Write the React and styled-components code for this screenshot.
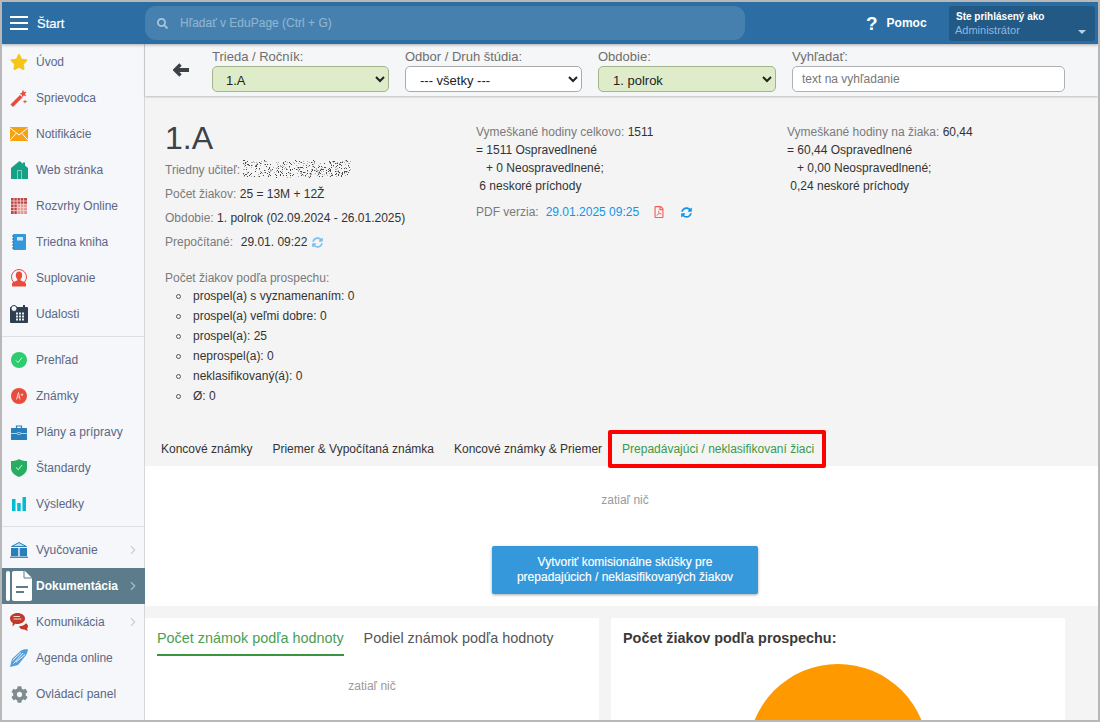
import styled, { createGlobalStyle } from 'styled-components';
import {
  FaCog,
  FaRegFilePdf,
  FaSearch,
  FaStar,
  FaSyncAlt,
} from 'react-icons/fa';
import { FiChevronRight } from 'react-icons/fi';

const GlobalStyle = createGlobalStyle`
  html, body {
    margin: 0;
    height: 100%;
    overflow: hidden;
  }

  body {
    font-family: 'Liberation Sans', Arial, sans-serif;
    font-size: 12px;
    color: #333;
  }
`;

const Frame = styled.div`
  box-sizing: border-box;
  width: 1100px;
  height: 722px;
  border: 2px solid #b8b8b8;
  display: grid;
  grid-template-columns: 143px 1fr;
  grid-template-rows: 42px 1fr;
  overflow: hidden;
`;

const Header = styled.header`
  grid-column: 1 / -1;
  display: flex;
  align-items: center;
  background: #2c6ea3;
  box-shadow: 0 1px 3px rgba(0, 0, 0, 0.3);
  position: relative;
  z-index: 2;
`;

const Burger = styled.div`
  width: 18px;
  margin-left: 8px;
  display: flex;
  flex-direction: column;
  gap: 4px;

  span {
    height: 2px;
    background: #fff;
  }
`;

const StartLabel = styled.div`
  width: 108px;
  margin-left: 9px;
  color: #fff;
  font-size: 13px;
  -webkit-text-stroke: 0.2px #fff;
`;

const SearchBar = styled.div`
  width: 600px;
  height: 34px;
  display: flex;
  align-items: center;
  gap: 12px;
  padding-left: 12px;
  box-sizing: border-box;
  background: #4580ae;
  border-radius: 11px;
  color: #8fb4d0;
  font-size: 12px;
  -webkit-text-stroke: 0.15px #8fb4d0;
`;

const HelpLink = styled.div`
  margin-left: 121px;
  width: 83px;
  display: flex;
  align-items: center;
  gap: 9px;
  color: #fff;
  font-size: 12px;
  font-weight: bold;

  b {
    font-size: 19px;
    line-height: 1;
  }
`;

const UserBox = styled.div`
  box-sizing: border-box;
  width: 146px;
  height: 35px;
  padding: 4px 7px 0;
  display: flex;
  flex-direction: column;
  gap: 1px;
  position: relative;
  background: #235a85;
  border-radius: 3px;
  font-size: 11px;
  line-height: 13px;

  strong {
    color: #fff;
    font-size: 10px;
  }

  span {
    color: #8db8e2;
    margin-left: -1px;
  }

  &::after {
    content: '';
    position: absolute;
    right: 9px;
    bottom: 7px;
    border: 4px solid transparent;
    border-top-color: #b9cfe2;
    border-bottom-width: 0;
  }
`;

const Sidebar = styled.nav`
  background: #f5f7fa;
  border-right: 1px solid #d4d6da;
`;

const NavGroup = styled.div`
  padding: 0 0 4px;
  margin-bottom: 5px;
  border-bottom: ${(p) => (p.$last ? 'none' : '1px solid #dddfe3')};
`;

const NavRow = styled.div`
  height: 36px;
  display: flex;
  align-items: center;
  position: relative;
  padding-left: 8px;
  margin-right: ${(p) => (p.$active ? '-1px' : '0')};
  font-size: 12px;
  color: ${(p) => (p.$active ? '#fff' : '#5b6785')};
  font-weight: ${(p) => (p.$active ? 'bold' : 'normal')};
  background: ${(p) => (p.$active ? '#5c7c8c' : 'transparent')};

  svg.chevron {
    position: absolute;
    right: ${(p) => (p.$active ? '5px' : '4px')};
    top: 11px;
    color: ${(p) => (p.$active ? '#a8bcc6' : '#ccd0d6')};
  }
`;

const NavIcon = styled.span`
  width: 18px;
  height: 20px;
  margin-right: 8px;
  display: flex;
  align-items: center;
  justify-content: center;
  flex: none;

  svg {
    flex: none;
  }
`;

const Main = styled.main`
  background: #f4f4f4;
  min-width: 0;
  display: flex;
  flex-direction: column;
`;

const Toolbar = styled.div`
  height: 52px;
  box-sizing: border-box;
  padding: 4px 0 0 28px;
  display: flex;
  background: #f5f6f8;
  box-shadow: 0 1px 2px rgba(0, 0, 0, 0.22);
  position: relative;
  z-index: 1;
`;

const BackArrow = styled.div`
  width: 39px;
  padding-top: 14px;
`;

const Field = styled.label`
  display: flex;
  flex-direction: column;
  width: ${(p) => p.$width}px;
  margin-right: 16px;
  color: #6e6e6e;
  font-size: 13px;
  line-height: 18px;
`;

const Picker = styled.select`
  box-sizing: border-box;
  height: 26px;
  width: 100%;
  padding: 2px 0 0 ${(p) => (p.$inset ? 9 : 10)}px;
  border: 1px solid ${(p) => (p.$filled ? '#a4b58b' : '#aaa')};
  border-radius: 5px;
  background: ${(p) => (p.$filled ? '#dfecc9' : '#fff')};
  color: #222;
  font-family: inherit;
  font-size: 13px;
`;

const SearchInput = styled.input`
  box-sizing: border-box;
  height: 26px;
  width: 100%;
  padding: 0 9px;
  border: 1px solid #b0b0b0;
  border-radius: 5px;
  background: #fff;
  font-family: inherit;
  font-size: 12px;

  &::placeholder {
    color: #777;
    opacity: 1;
  }
`;

const Summary = styled.section`
  height: 334px;
  padding: 24px 0 0 20px;
  box-sizing: border-box;
  display: grid;
  grid-template-columns: 311px 311px 1fr;
`;

const ClassTitle = styled.h1`
  margin: 0 0 2px;
  font-size: 32px;
  line-height: 36px;
  font-weight: normal;
  color: #3d4248;
`;

const InfoLine = styled.div`
  height: 24px;
  line-height: 24px;
  color: #333;
  white-space: pre;
  display: flex;
  align-items: center;
`;

const RecalcValue = styled.span`
  margin-left: 1px;
`;

const GradesHeading = styled.div`
  margin-top: 16px;
  height: 16px;
  line-height: 16px;
`;

const Muted = styled.span`
  color: #7a7a7a;
`;

const GradeList = styled.ul`
  margin: 0;
  padding: 0 0 0 28px;
  list-style: none;
`;

const GradeItem = styled.li`
  height: 20px;
  line-height: 20px;
  position: relative;

  &::before {
    content: '';
    position: absolute;
    left: -17px;
    top: 8px;
    width: 3px;
    height: 3px;
    border: 1px solid #555;
    border-radius: 50%;
  }
`;

const AbsenceColumn = styled.div`
  margin-top: 3px;
`;

const AbsenceLine = styled.div`
  height: 18px;
  line-height: 18px;
  white-space: pre;
`;

const PdfLine = styled.div`
  margin-top: 8px;
  height: 18px;
  display: flex;
  align-items: center;
`;

const PdfPart = styled.span`
  display: inline-flex;
  margin-left: ${(p) => p.$gap}px;
  color: ${(p) => p.$color};
`;

const Tabs = styled.div`
  height: 36px;
  padding-left: 6px;
  display: flex;
`;

const Tab = styled.div`
  position: relative;
  padding: 2px 10px 0;
  display: flex;
  align-items: center;
  font-size: 12px;
  color: ${(p) => (p.$active ? '#3a9a46' : '#333')};

  ${(p) =>
    p.$active &&
    `
    &::after {
      content: '';
      position: absolute;
      left: -4px;
      right: -2px;
      top: 0;
      bottom: -2px;
      border: 4px solid #fe0000;
      border-radius: 2px;
    }
  `}
`;

const WhiteBand = styled.section`
  height: 140px;
  padding: 27px 0 0 7px;
  box-sizing: border-box;
  background: #fff;
  display: flex;
  flex-direction: column;
  align-items: center;
`;

const EmptyNote = styled.div`
  height: 14px;
  line-height: 14px;
  color: #9a9a9a;
`;

const CreateButton = styled.div`
  box-sizing: border-box;
  width: 266px;
  height: 48px;
  margin-top: 39px;
  display: flex;
  align-items: center;
  justify-content: center;
  text-align: center;
  background: #3498db;
  color: #fff;
  font-size: 12px;
  line-height: 15px;
  border-radius: 2px;
  box-shadow: 0 1px 3px rgba(0, 0, 0, 0.35);
  -webkit-text-stroke: 0.15px #fff;
`;

const Cards = styled.div`
  display: flex;
  gap: 12px;
  padding-top: 12px;
  flex: 1;
  min-height: 0;
`;

const Card = styled.div`
  width: 454px;
  background: #fff;
  overflow: hidden;
`;

const CardTabs = styled.div`
  display: flex;
  gap: 20px;
  padding: 7px 0 0 12px;
  font-size: 14.4px;
`;

const CardTab = styled.div`
  height: 31px;
  line-height: 27px;
  box-sizing: border-box;
  color: ${(p) => (p.$active ? '#4a9e55' : '#555')};
  border-bottom: ${(p) => (p.$active ? '2px solid #3a9440' : 'none')};
`;

const CardNote = styled(EmptyNote)`
  text-align: center;
  margin-top: 23px;
`;

const ChartTitle = styled.h3`
  margin: 0;
  padding: 12px 12px 0;
  font-size: 14.4px;
  line-height: 16px;
  color: #3a3a3a;
`;

const PieHolder = styled.div`
  display: flex;
  justify-content: center;
  padding-top: 18px;
`;

const NoiseBox = styled.svg`
  margin: -2px 0 0 3px;
`;

const BackIcon = () => (
  <svg width="16" height="16" viewBox="0 0 16 16">
    <path d="M7.500 2.500 2 8l5.500 5.500" stroke="#3d4248" strokeWidth="3.400" fill="none" />
    <path d="M3 8h13" stroke="#3d4248" strokeWidth="4" />
  </svg>
);

const Icons = {
  wand: (
    <svg width="18" height="18" viewBox="0 0 18 18">
      <path d="M.5 15.500 10 6l2.500 2.500L3 18z" fill="#e74c3c" />
      <path d="M13 .5l.9 2.600 2.600-.4-1.500 2.200 1.300 2.300-2.500-.7-1.800 1.800-.1-2.500-2.400-1.100 2.400-1z" fill="#e74c3c" />
      <path d="M15 10.500l.6 1.600 1.700.5-1.700.6-.6 1.600-.6-1.600-1.700-.6 1.700-.5z" fill="#e74c3c" />
    </svg>
  ),
  mail: (
    <svg width="18" height="14" viewBox="0 0 18 14">
      <rect width="18" height="14" fill="#f5a314" />
      <path d="M0 .8 9 8l9-7.200M0 13.400 6.400 6M18 13.400 11.600 6" stroke="#fff" strokeWidth="1" fill="none" />
    </svg>
  ),
  home: (
    <svg width="17" height="18" viewBox="0 0 17 18">
      <path d="M8.500 0 12 2.800V1.500h2v3l3 2.500v11H0V7z" fill="#16a085" />
      <path d="M6 9h5v9H6z" fill="#7fd0bd" />
      <path d="M7 10h3v8H7z" fill="#16a085" />
    </svg>
  ),
  timetable: (
    <svg width="16" height="16" viewBox="0 0 16 16">
      <rect width="16" height="16" fill="#bd4440" />
      <rect x="6" y="6" width="10" height="10" fill="#e09a97" />
      {[3, 6.200, 9.400, 12.600].map((v) => (
        <path key={v} d={`M${v} 0v16M0 ${v}h16`} stroke="#f3d8d6" strokeWidth="0.800" />
      ))}
    </svg>
  ),
  book: (
    <svg width="14" height="16" viewBox="0 0 14 16">
      <rect x="1" width="13" height="16" rx="1" fill="#3498db" />
      <rect x="5" y="3" width="6" height="3.500" fill="#cfe6f7" />
      <path d="M0 2h2M0 5h2M0 8h2M0 11h2M0 14h2" stroke="#2a6f9e" strokeWidth="1" />
    </svg>
  ),
  person: (
    <svg width="18" height="18" viewBox="0 0 18 18">
      <circle cx="9" cy="8" r="7.500" fill="none" stroke="#e74c3c" strokeWidth="1" />
      <path d="M9 2.500c2.200 0 3.400 1.700 3.200 4-.1 1.700-.8 3-1.500 3.700v1.300c2.200.8 5.300 1.700 5.300 3.500v2.500H2v-2.500c0-1.800 3.100-2.700 5.300-3.500v-1.300C6.600 9.500 5.900 8.200 5.800 6.500c-.2-2.300 1-4 3.200-4z" fill="#e74c3c" />
    </svg>
  ),
  calendar: (
    <svg width="18" height="18" viewBox="0 0 18 18">
      <rect y="2" width="18" height="16" rx="1" fill="#2c3e50" />
      <circle cx="4" cy="3.500" r="3" fill="#f5f7fa" stroke="#2c3e50" strokeWidth="1" />
      <rect x="13" width="2" height="4" fill="#2c3e50" />
      <g fill="#e8edf0">
        {[7, 10, 13].map((x) =>
          [7.500, 10.500, 13.500].map((y) => <rect key={`${x}${y}`} x={x - 1} y={y} width="2" height="2" />),
        )}
      </g>
    </svg>
  ),
  overview: (
    <svg width="16" height="16" viewBox="0 0 16 16">
      <circle cx="8" cy="8" r="8" fill="#2ecc71" />
      <path d="M5 8.500 7 10.500 11 5.500" stroke="#d8f7e5" strokeWidth="1" fill="none" />
    </svg>
  ),
  marks: (
    <svg width="16" height="16" viewBox="0 0 16 16">
      <circle cx="8" cy="8" r="8" fill="#e74c3c" />
      <path d="M5.500 11.500 7.500 4.500 9 11.500M6 9h3M11 5.500v2.500M9.800 6.700h2.400" stroke="#fbdcd8" strokeWidth="0.900" fill="none" />
    </svg>
  ),
  briefcase: (
    <svg width="16" height="15" viewBox="0 0 16 15">
      <path d="M5.500 3V1h5v2" stroke="#2980b9" strokeWidth="1.200" fill="none" />
      <rect y="3" width="16" height="12" rx="0.500" fill="#2980b9" />
      <path d="M0 8.500h6M10 8.500h6" stroke="#d5e8f5" strokeWidth="0.800" />
      <rect x="6.200" y="7.500" width="3.600" height="2" rx="1" fill="none" stroke="#d5e8f5" strokeWidth="0.700" />
    </svg>
  ),
  shield: (
    <svg width="16" height="18" viewBox="0 0 16 18">
      <path d="M8 0c2 1.500 5 2 8 2v7c0 4-3.500 7.500-8 9-4.500-1.500-8-5-8-9V2c3 0 6-.5 8-2z" fill="#27ae60" />
      <path d="M5 8.500 7.300 10.700 11 6" stroke="#d8f7e5" strokeWidth="1" fill="none" />
    </svg>
  ),
  bars: (
    <svg width="14" height="14" viewBox="0 0 14 14">
      <rect y="2" width="3.500" height="12" fill="#00bcd4" />
      <rect x="5.200" y="6" width="3.500" height="8" fill="#00bcd4" />
      <rect x="10.500" width="3.500" height="14" fill="#00bcd4" />
    </svg>
  ),
  teaching: (
    <svg width="18" height="16" viewBox="0 0 18 16">
      <path d="M1.500 4.500 9 .5l7.500 4H1.500z" fill="#bcdcf2" stroke="#2980b9" strokeWidth="1" />
      <path d="M1 6h7.300v8.200H1zM9.700 6H17v8.200H9.700z" fill="#2980b9" />
      <path d="M0 15.300h18" stroke="#2980b9" strokeWidth="1.200" />
    </svg>
  ),
  docs: (
    <svg width="26" height="30" viewBox="0 0 26 30">
      <rect x="0" y="0" width="4" height="30" rx="2" fill="#fff" />
      <path d="M8 0h11l7 7v21c0 1.200-.8 2-2 2H8c-1.200 0-2-.8-2-2V2c0-1.200.8-2 2-2z" fill="#fff" />
      <path d="M18 0v7h8" fill="none" stroke="#5c7c8c" strokeWidth="1" />
      <path d="M10 16h12M10 21h8" stroke="#5c7c8c" strokeWidth="2" />
    </svg>
  ),
  chat: (
    <svg width="18" height="18" viewBox="0 0 18 18">
      <path d="M7.500 0c4.100 0 7.500 2.400 7.500 5.500S11.600 11 7.500 11c-.8 0-1.500 0-2.200-.2L2.500 13.500l.3-3.500C1.100 9 0 7.400 0 5.500 0 2.400 3.400 0 7.500 0z" fill="#c0392b" />
      <path d="M3.500 3.500h6.500M3.500 6h8" stroke="#f3d6d2" strokeWidth="1" />
      <path d="M9 13.200c2.900 0 5.600-1 7-2.900 1.300.8 2 1.900 2 3 0 1-.5 1.700-1 2.200l.8 2.500-3.500-1.500c-2.400.3-4.400-1-5.300-3.300z" fill="#c0392b" />
    </svg>
  ),
  pen: (
    <svg width="18" height="18" viewBox="0 0 18 18">
      <path d="M0 18 2 10 10.500 2c2-1.700 5.500-2.300 7.500-1.500-.3 2.800-1.500 5.600-3.500 7.500L8 16z" fill="#4a9fe0" />
      <path d="M3.500 14.500 13 4M6 13.200 15 5.500M2.500 11.500 11 3.500" stroke="#f5f7fa" strokeWidth="1" />
    </svg>
  ),
};

const navGroups = [
  [
    ['Úvod', <FaStar size={18} color="#f5c518" />],
    ['Sprievodca', Icons.wand],
    ['Notifikácie', Icons.mail],
    ['Web stránka', Icons.home],
    ['Rozvrhy Online', Icons.timetable],
    ['Triedna kniha', Icons.book],
    ['Suplovanie', Icons.person],
    ['Udalosti', Icons.calendar],
  ],
  [
    ['Prehľad', Icons.overview],
    ['Známky', Icons.marks],
    ['Plány a prípravy', Icons.briefcase],
    ['Štandardy', Icons.shield],
    ['Výsledky', Icons.bars],
  ],
  [
    ['Vyučovanie', Icons.teaching, 'more'],
    ['Dokumentácia', Icons.docs, 'active'],
    ['Komunikácia', Icons.chat, 'more'],
    ['Agenda online', Icons.pen],
    ['Ovládací panel', <FaCog size={17} color="#7f8c8d" />],
  ],
];

const grades = [
  'prospel(a) s vyznamenaním: 0',
  'prospel(a) veľmi dobre: 0',
  'prospel(a): 25',
  'neprospel(a): 0',
  'neklasifikovaný(á): 0',
  'Ø: 0',
];

// pixel noise standing in for the teacher's blurred name
function NameNoise() {
  let seed = 7;
  const next = () => {
    seed = (seed * 16807) % 2147483647;
    return seed / 2147483647;
  };
  const dots = [];
  for (let i = 0; i < 420; i += 1) {
    const x = Math.floor(next() * 108);
    const y = Math.floor(3 + next() * 16 + (x % 17) / 8);
    dots.push(<rect key={i} x={x} y={y} width="1" height="1" fill={next() > 0.45 ? '#4a4a4a' : '#aaa'} />);
  }
  return (
    <NoiseBox width="108" height="24" viewBox="0 0 108 24">
      {dots}
    </NoiseBox>
  );
}

const Absence = ({ title, total, rows }) => (
  <AbsenceColumn>
    <AbsenceLine>
      <Muted>{title} </Muted>
      {total}
    </AbsenceLine>
    {rows.map((r) => (
      <AbsenceLine key={r}>{r}</AbsenceLine>
    ))}
  </AbsenceColumn>
);

export default function App() {
  return (
    <>
      <GlobalStyle />
      <Frame>
        <Header>
          <Burger>
            <span />
            <span />
            <span />
          </Burger>
          <StartLabel>Štart</StartLabel>
          <SearchBar>
            <FaSearch size={11} color="#a9c6dc" />
            Hľadať v EduPage (Ctrl + G)
          </SearchBar>
          <HelpLink>
            <b>?</b>
            Pomoc
          </HelpLink>
          <UserBox>
            <strong>Ste prihlásený ako</strong>
            <span>Administrátor</span>
          </UserBox>
        </Header>

        <Sidebar>
          {navGroups.map((group, i) => (
            <NavGroup key={i} $last={i === navGroups.length - 1}>
              {group.map(([label, icon, kind]) => (
                <NavRow key={label} $active={kind === 'active'}>
                  <NavIcon>{icon}</NavIcon>
                  {label}
                  {kind && <FiChevronRight className="chevron" size={14} />}
                </NavRow>
              ))}
            </NavGroup>
          ))}
        </Sidebar>

        <Main>
          <Toolbar>
            <BackArrow>
              <BackIcon />
            </BackArrow>
            <Field $width={177}>
              Trieda / Ročník:
              <Picker $filled $inset>
                <option>1.A</option>
              </Picker>
            </Field>
            <Field $width={177}>
              Odbor / Druh štúdia:
              <Picker>
                <option>--- všetky ---</option>
              </Picker>
            </Field>
            <Field $width={178}>
              Obdobie:
              <Picker $filled>
                <option>1. polrok</option>
              </Picker>
            </Field>
            <Field $width={273}>
              Vyhľadať:
              <SearchInput placeholder="text na vyhľadanie" />
            </Field>
          </Toolbar>

          <Summary>
            <div>
              <ClassTitle>1.A</ClassTitle>
              <InfoLine>
                <Muted>Triedny učiteľ:</Muted>
                <NameNoise />
              </InfoLine>
              <InfoLine>
                <Muted>Počet žiakov: </Muted>25 = 13M + 12Ž
              </InfoLine>
              <InfoLine>
                <Muted>Obdobie: </Muted>1. polrok (02.09.2024 - 26.01.2025)
              </InfoLine>
              <InfoLine>
                <Muted>Prepočítané: </Muted>
                <RecalcValue> 29.01. 09:22</RecalcValue>
                <PdfPart $gap={5} $color="#7cc0ee">
                  <FaSyncAlt size={11} />
                </PdfPart>
              </InfoLine>
              <GradesHeading>
                <Muted>Počet žiakov podľa prospechu:</Muted>
              </GradesHeading>
              <GradeList>
                {grades.map((g) => (
                  <GradeItem key={g}>{g}</GradeItem>
                ))}
              </GradeList>
            </div>
            <div>
              <Absence
                title="Vymeškané hodiny celkovo:"
                total="1511"
                rows={['= 1511 Ospravedlnené', '   + 0 Neospravedlnené;', ' 6 neskoré príchody']}
              />
              <PdfLine>
                <Muted>PDF verzia:</Muted>
                <PdfPart $gap={7} $color="#0d96ec">29.01.2025 09:25</PdfPart>
                <PdfPart $gap={14} $color="#f0605a">
                  <FaRegFilePdf size={12} />
                </PdfPart>
                <PdfPart $gap={16} $color="#0d96ec">
                  <FaSyncAlt size={11} />
                </PdfPart>
              </PdfLine>
            </div>
            <Absence
              title="Vymeškané hodiny na žiaka:"
              total="60,44"
              rows={['= 60,44 Ospravedlnené', '   + 0,00 Neospravedlnené;', ' 0,24 neskoré príchody']}
            />
          </Summary>

          <Tabs>
            <Tab>Koncové známky</Tab>
            <Tab>Priemer &amp; Vypočítaná známka</Tab>
            <Tab>Koncové známky &amp; Priemer</Tab>
            <Tab $active>Prepadávajúci / neklasifikovaní žiaci</Tab>
          </Tabs>

          <WhiteBand>
            <EmptyNote>zatiaľ nič</EmptyNote>
            <CreateButton>
              Vytvoriť komisionálne skúšky pre
              <br />
              prepadajúcich / neklasifikovaných žiakov
            </CreateButton>
          </WhiteBand>

          <Cards>
            <Card>
              <CardTabs>
                <CardTab $active>Počet známok podľa hodnoty</CardTab>
                <CardTab>Podiel známok podľa hodnoty</CardTab>
              </CardTabs>
              <CardNote>zatiaľ nič</CardNote>
            </Card>
            <Card>
              <ChartTitle>Počet žiakov podľa prospechu:</ChartTitle>
              <PieHolder>
                <svg width="180" height="180" viewBox="0 0 180 180">
                  <circle cx="90" cy="90" r="90" fill="#ff9900" />
                </svg>
              </PieHolder>
            </Card>
          </Cards>
        </Main>
      </Frame>
    </>
  );
}
